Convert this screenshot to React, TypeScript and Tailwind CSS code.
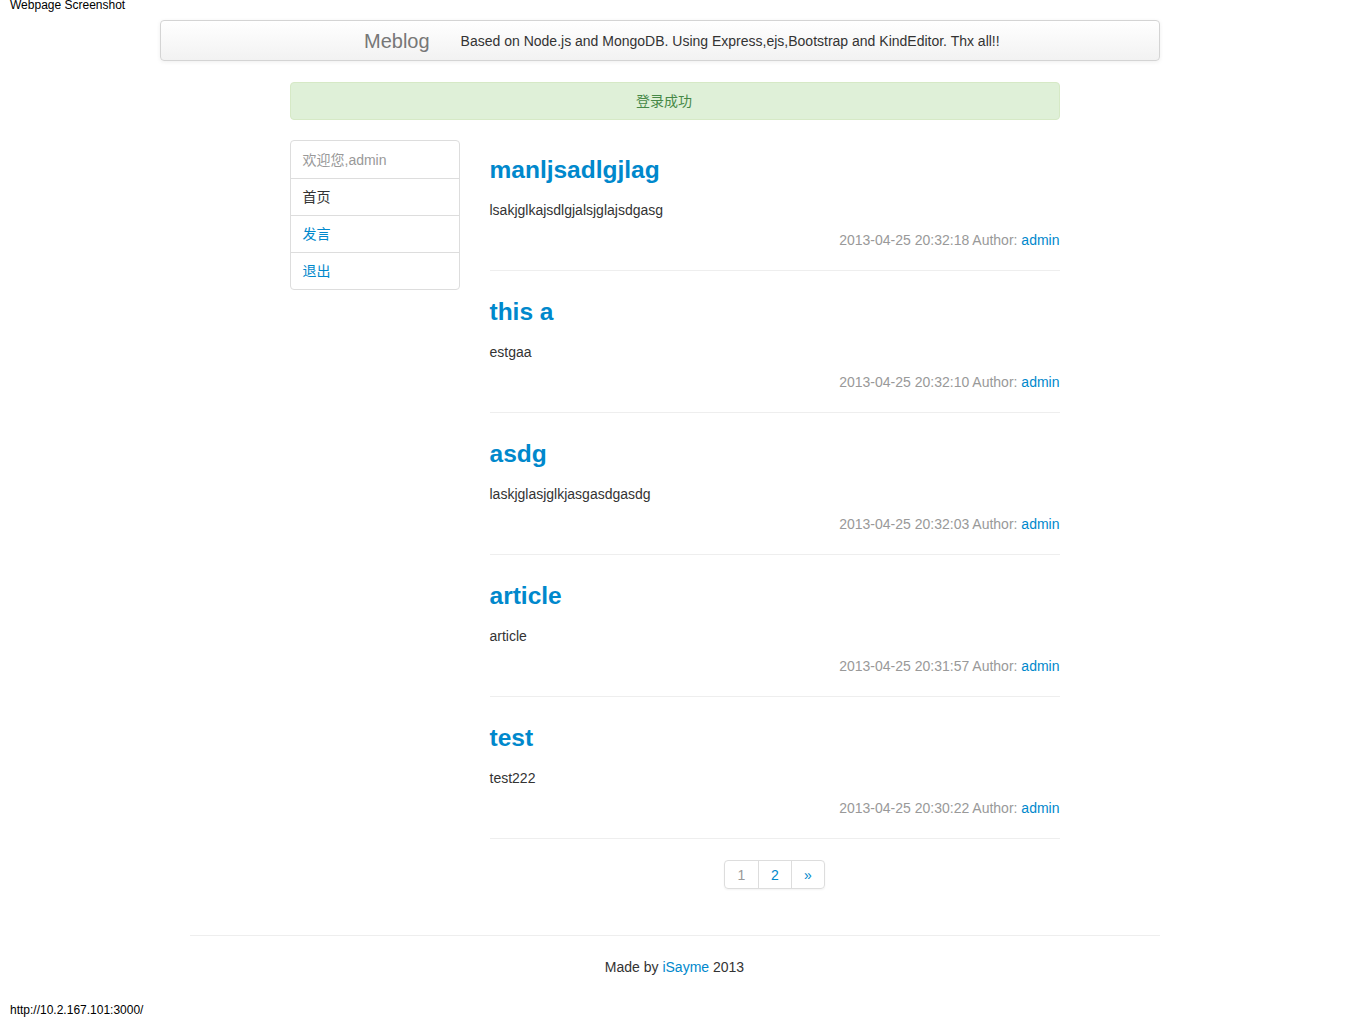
import React from "react";

const posts = [
  { title: "manljsadlgjlag", body: "lsakjglkajsdlgjalsjglajsdgasg", time: "2013-04-25 20:32:18" },
  { title: "this a", body: "estgaa", time: "2013-04-25 20:32:10" },
  { title: "asdg", body: "laskjglasjglkjasgasdgasdg", time: "2013-04-25 20:32:03" },
  { title: "article", body: "article", time: "2013-04-25 20:31:57" },
  { title: "test", body: "test222", time: "2013-04-25 20:30:22" },
];

const font = { fontFamily: '"Liberation Sans", Arial, "Noto Sans CJK SC", sans-serif' };

export default function App() {
  return (
    <div style={font} className="relative min-h-[1017px] bg-white text-[14px] leading-5 text-[#333]">
      {/* screenshot label */}
      <div className="absolute left-[10px] top-[-3px] text-[12px] leading-4 text-black">Webpage Screenshot</div>

      <div className="pt-5">
        {/* navbar */}
        <div className="ml-[160px] flex h-[41px] w-[1000px] items-center rounded border border-[#d4d4d4] bg-gradient-to-b from-white to-[#f2f2f2] pl-[203px] shadow-[0_1px_4px_rgba(0,0,0,0.065)]">
          <span className="text-[20px] leading-5 text-[#777]">Meblog</span>
          <span className="ml-[31px] text-[14px] text-[#333]">
            Based on Node.js and MongoDB. Using Express,ejs,Bootstrap and KindEditor. Thx all!!
          </span>
        </div>

        {/* alert */}
        <div className="mx-auto mt-[21px] flex h-[38px] w-[770px] items-center justify-center rounded border border-[#d6e9c6] bg-[#dff0d8] pl-[14px] pr-[35px] text-[#468847]">
          登录成功
        </div>

        <div className="mx-auto mt-5 flex w-[770px] gap-[30px]">
          {/* sidebar */}
          <div className="w-[170px] self-start">
            <ul className="rounded border border-[#ddd] bg-white">
              <li className="flex h-[37px] items-center px-3 text-[#999]">欢迎您,admin</li>
              <li className="flex h-[37px] items-center border-t border-[#ddd] px-3 text-[#333]">首页</li>
              <li className="flex h-[37px] items-center border-t border-[#ddd] px-3 text-[#0088cc]">发言</li>
              <li className="flex h-[37px] items-center border-t border-[#ddd] px-3 text-[#0088cc]">退出</li>
            </ul>
          </div>

          {/* posts */}
          <div className="w-[570px]">
            {posts.map((p) => (
              <div key={p.time} className="pb-[11px] pt-[10px]">
                <h3 className="h-10 text-[24.5px] font-bold leading-10 text-[#0088cc]">{p.title}</h3>
                <p className="mt-[10px] h-5">{p.body}</p>
                <p className="mt-[10px] h-5 text-right text-[#999]">
                  {p.time} Author: <span className="text-[#0088cc]">admin</span>
                </p>
                <div className="mt-5 h-px bg-[#eee]" />
              </div>
            ))}

            <div className="mt-[10px] flex justify-center">
              <div className="flex h-[29px] rounded border border-[#ddd] shadow-[0_1px_2px_rgba(0,0,0,0.05)]">
                <span className="flex w-[33px] items-center justify-center text-[#999]">1</span>
                <span className="flex w-[33px] items-center justify-center border-l border-[#ddd] text-[#0088cc]">2</span>
                <span className="flex w-[33px] items-center justify-center border-l border-[#ddd] text-[#0088cc]">»</span>
              </div>
            </div>
          </div>
        </div>

        {/* footer */}
        <div className="mx-auto mt-[46px] w-[970px] border-t border-[#eee] pt-[21px] text-center">
          Made by <span className="text-[#0088cc]">iSayme</span> 2013
        </div>
      </div>

      {/* status bar */}
      <div className="absolute bottom-0 left-[10px] text-[12px] leading-[14px] text-black">http://10.2.167.101:3000/</div>
    </div>
  );
}
